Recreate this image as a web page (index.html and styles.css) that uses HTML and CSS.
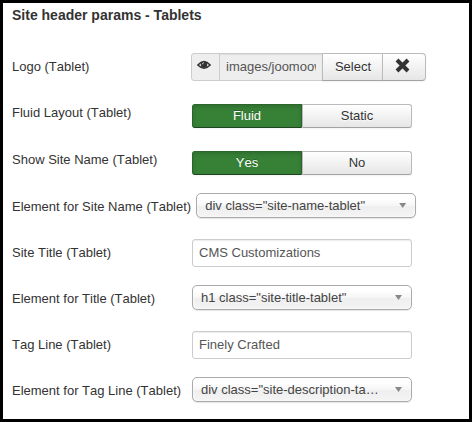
FILE: index.html
```html
<!DOCTYPE html>
<html lang="en">
<head>
<meta charset="utf-8">
<title>Site header params</title>
<link rel="stylesheet" href="styles.css">
</head>
<body>
<main class="panel">
  <h1 class="title">Site header params - Tablets</h1>
  <form class="rows">
    <div class="row">
      <span class="label">Logo (Tablet)</span>
      <div class="media">
        <span class="addon"><svg width="14" height="11" viewBox="0 0 14 11"><path d="M.9 5Q7-1.8 13.1 5Q7 11.4 .9 5Z" fill="#fff" stroke="#333" stroke-width="1.6"/><circle cx="7" cy="4.7" r="3.3" fill="#333"/><path d="M5.3 4.4Q5.4 2.9 6.9 2.7" fill="none" stroke="#ddd" stroke-width=".9"/></svg></span>
        <span class="path"><span class="path-text">images/joomoow</span></span>
        <span class="btn select">Select</span>
        <span class="btn clear"><svg width="15" height="15" viewBox="0 0 15 15"><path d="M2 2L13 13M13 2L2 13" stroke="#333" stroke-width="4"/></svg></span>
      </div>
    </div>
    <div class="row">
      <span class="label">Fluid Layout (Tablet)</span>
      <div class="toggle"><span class="btn on">Fluid</span><span class="btn off">Static</span></div>
    </div>
    <div class="row">
      <span class="label">Show Site Name (Tablet)</span>
      <div class="toggle"><span class="btn on">Yes</span><span class="btn off">No</span></div>
    </div>
    <div class="row">
      <span class="label">Element for Site Name (Tablet)</span>
      <div class="chosen"><span class="value">div class="site-name-tablet"</span><i class="arrow"></i></div>
    </div>
    <div class="row">
      <span class="label">Site Title (Tablet)</span>
      <div class="field">CMS Customizations</div>
    </div>
    <div class="row">
      <span class="label">Element for Title (Tablet)</span>
      <div class="chosen"><span class="value">h1 class="site-title-tablet"</span><i class="arrow"></i></div>
    </div>
    <div class="row">
      <span class="label">Tag Line (Tablet)</span>
      <div class="field">Finely Crafted</div>
    </div>
    <div class="row">
      <span class="label">Element for Tag Line (Tablet)</span>
      <div class="chosen"><span class="value">div class="site-description-ta…</span><i class="arrow"></i></div>
    </div>
  </form>
</main>
</body>
</html>
```
FILE: styles.css
```css
* { box-sizing: border-box; }
body {
  margin: 0;
  font: 13px/18px "Liberation Sans", Arial, sans-serif;
  color: #333;
  background: #fff;
}
.panel {
  height: 422px;
  border: 3px solid #000;
  padding: 3px 0 0 9px;
  overflow: hidden;
}
.title {
  margin: 0 0 29px;
  font-size: 14px;
  line-height: 18px;
  font-weight: bold;
}
.rows {
  display: grid;
  grid-template-rows: 46px 47px 47px 46px 46px 46px 46px 30px;
  font-kerning: none;
}
.row { display: flex; align-items: flex-start; }
.label {
  min-width: 180px;
  padding: 5px 5px 0 0;
  white-space: nowrap;
}
.media { display: flex; height: 28px; margin-left: -1px; }
.addon {
  width: 29px;
  border: 1px solid #ccc;
  border-radius: 3px 0 0 3px;
  background: #eee;
  padding: 6px 0 0 5px;
}
.addon svg, .clear svg { display: block; }
.path {
  width: 104px;
  margin-left: -1px;
  padding: 4px 6px 0;
  border: 1px solid #ccc;
  border-right: 0;
  background: #eee;
  color: #555;
  box-shadow: inset 0 1px 1px rgba(0, 0, 0, .075);
}
.path-text { display: block; width: 90px; overflow: hidden; white-space: nowrap; }
.btn {
  border: 1px solid #bbb;
  border-bottom-color: #a2a2a2;
  background: linear-gradient(#fff, #e6e6e6);
  box-shadow: inset 0 1px 0 rgba(255, 255, 255, .2), 0 1px 2px rgba(0, 0, 0, .05);
  text-align: center;
  text-shadow: 0 1px 1px rgba(255, 255, 255, .75);
}
.select { width: 61px; margin-left: -1px; padding: 4px 0 0 1px; }
.clear {
  width: 44px;
  margin-left: -1px;
  padding: 4px 0 0 12px;
  border-radius: 0 4px 4px 0;
}
.toggle { display: flex; width: 220px; height: 24px; margin-top: 5px; }
.toggle .btn { flex: 1; padding-top: 2px; }
.toggle .on {
  border: 1px solid #2b652b;
  border-bottom-color: #1d441d;
  border-radius: 3px 0 0 3px;
  background: #378137;
  box-shadow: inset 0 2px 4px rgba(0, 0, 0, .15), 0 1px 2px rgba(0, 0, 0, .05);
  color: #fff;
  text-shadow: 0 -1px 0 rgba(0, 0, 0, .25);
}
.toggle .off { border-radius: 0 3px 3px 0; }
.field {
  width: 220px;
  height: 28px;
  padding: 4px 6px;
  border: 1px solid #ccc;
  border-radius: 3px;
  color: #555;
  box-shadow: inset 0 1px 1px rgba(0, 0, 0, .075);
}
.chosen {
  display: flex;
  width: 220px;
  height: 25px;
  padding: 3px 8px 0 8px;
  border: 1px solid #aaa;
  border-radius: 5px;
  background: linear-gradient(#fff 20%, #f6f6f6 50%, #eee 52%, #f4f4f4 100%);
  box-shadow: inset 0 0 3px #fff, 0 1px 1px rgba(0, 0, 0, .1);
  color: #444;
}
.value {
  width: 184px;
  overflow: hidden;
  white-space: nowrap;
  text-overflow: ellipsis;
}
.arrow {
  margin: 6px 1px 0 auto;
  width: 7px;
  height: 5px;
  background: #888;
  clip-path: polygon(0 0, 100% 0, 50% 100%);
}
```
